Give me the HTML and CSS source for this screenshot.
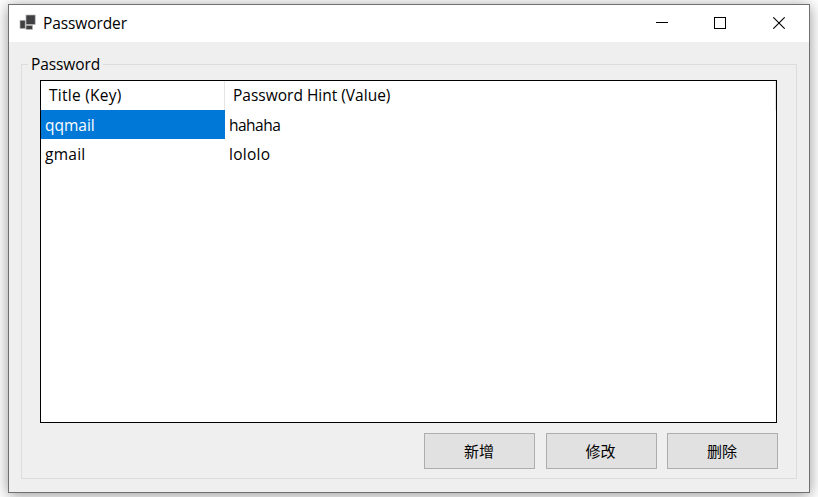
FILE: index.html
```html
<!DOCTYPE html>
<html lang="zh-CN">
<head>
<meta charset="utf-8">
<title>Passworder</title>
<link rel="stylesheet" href="styles.css">
</head>
<body>
<main class="window">
  <header class="titlebar">
    <svg class="app-icon" width="18" height="18" viewBox="0 0 18 18">
      <g fill="#404042" stroke="#b5b5b5" stroke-width=".7">
        <rect x="1" y="6.3" width="5.2" height="8.2"/>
        <rect x="7" y="11.4" width="6.5" height="4"/>
        <rect x="7" y="1" width="9.2" height="9.4"/>
      </g>
    </svg>
    <span class="app-title">Passworder</span>
    <div class="controls">
      <svg class="minimize" width="12" height="12" viewBox="0 0 12 12" shape-rendering="crispEdges"><path d="M0 5.5H12" stroke="#000"/></svg>
      <svg width="12" height="12" viewBox="0 0 12 12" shape-rendering="crispEdges"><rect x=".5" y=".5" width="11" height="11" fill="none" stroke="#000"/></svg>
      <svg width="12" height="12" viewBox="0 0 12 12"><path d="M.3 .3L11.7 11.7M11.7 .3L.3 11.7" stroke="#000" stroke-width="1.1"/></svg>
    </div>
  </header>
  <section class="group">
    <h2 class="legend">Password</h2>
    <div class="list">
      <div class="row head"><div class="cell loose">Title (Key)</div><div class="cell">Password Hint (Value)</div></div>
      <div class="row"><div class="cell selected">qqmail</div><div class="cell tight">hahaha</div></div>
      <div class="row"><div class="cell loose">gmail</div><div class="cell loose">lololo</div></div>
    </div>
    <div class="actions">
      <button>新增</button>
      <button>修改</button>
      <button>删除</button>
    </div>
  </section>
</main>
</body>
</html>
```
FILE: styles.css
```css
* { box-sizing: border-box; }
body {
  margin: 0;
  height: 497px;
  padding: 4px 8px;
  overflow: hidden;
  background: #fff;
  color: #000;
  font: 15.5px/20px "Open Sans", "Noto Sans CJK SC", sans-serif;
}
.window {
  width: 802px;
  height: 489px;
  border: 1px solid #707070;
  background: #efefef;
  box-shadow: 0 2px 14px rgba(0, 0, 0, .42);
}
.titlebar {
  display: flex;
  align-items: center;
  height: 37px;
  padding: 0 24px 1px 10px;
  background: #fff;
}
.app-icon { margin-right: 6px; }
.app-title, .legend { letter-spacing: -.1px; }
.controls { display: flex; gap: 47px; margin-left: auto; }
.minimize { margin-right: -1px; }
.group {
  display: flex;
  flex-direction: column;
  width: 776px;
  height: 415px;
  margin: 22px 0 0 12px;
  padding: 0 18px;
  border: 1px solid #dcdcdc;
}
.legend {
  align-self: flex-start;
  height: 20px;
  margin: -11px 0 6px -12px;
  padding: 0 3px;
  background: #efefef;
  font-size: inherit;
  font-weight: 400;
}
.list {
  width: 737px;
  height: 343px;
  border: 1px solid #000;
  background: #fff;
}
.row { display: grid; grid-template-columns: 184px 1fr; }
.cell { height: 29px; padding: 5px 4px 0; white-space: nowrap; }
.head .cell { padding: 4px 8px 0; border-right: 1px solid #e5e5e5; }
.loose { letter-spacing: .27px; }
.tight { letter-spacing: -.5px; }
.selected { background: #0078d7; color: #fff; }
.actions {
  display: grid;
  grid-template-columns: repeat(3, 111px);
  column-gap: 10.5px;
  justify-content: end;
  margin: 10px 0 0;
  width: 738px;
}
button {
  height: 36px;
  padding: 0 1px 1px 0;
  border: 1px solid #adadad;
  background: #e1e1e1;
  color: #000;
  font: 15px/20px "Noto Sans CJK SC", sans-serif;
}
```
